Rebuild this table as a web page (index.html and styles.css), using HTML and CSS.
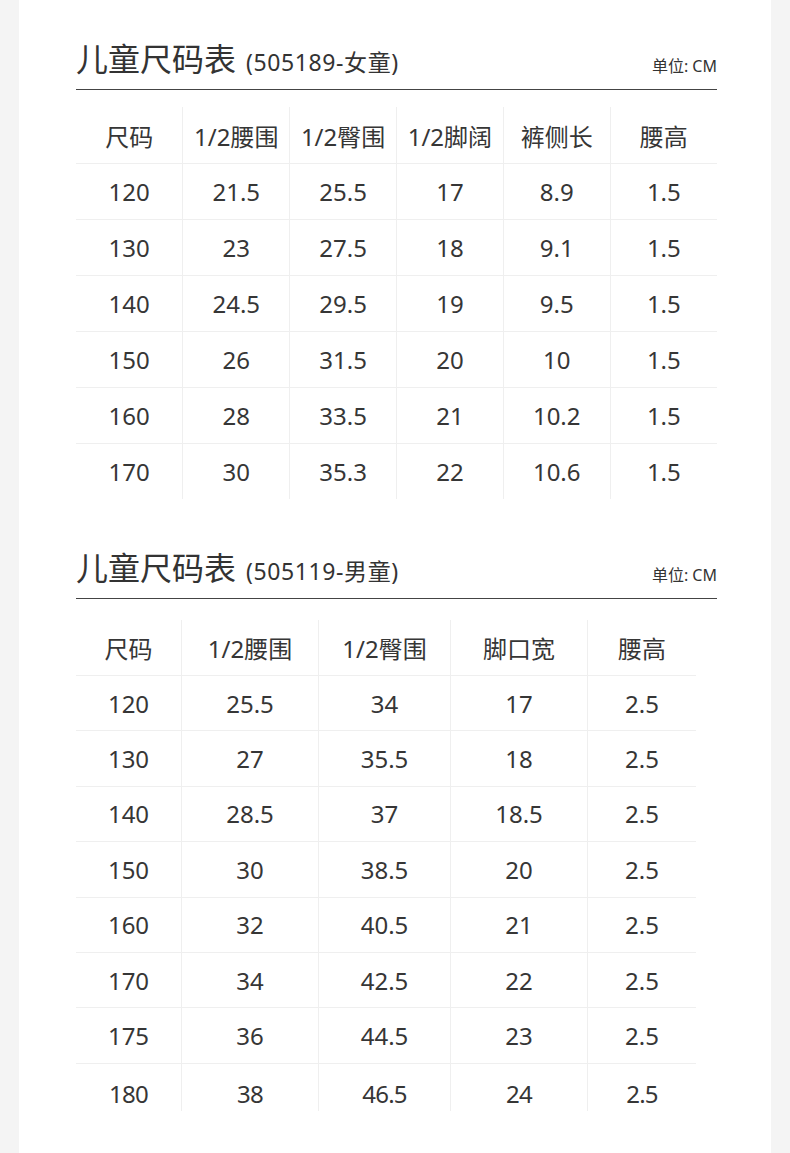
FILE: index.html
```html
<!DOCTYPE html>
<html lang="zh-CN">
<head>
<meta charset="utf-8">
<title>儿童尺码表</title>
<link rel="stylesheet" href="styles.css">
</head>
<body>
<div class="card">
  <section class="chart chart-girl">
    <div class="chart-head">
      <h2 class="chart-title">儿童尺码表<span class="chart-sub">(505189-女童)</span></h2>
      <span class="unit">单位: CM</span>
    </div>
    <table class="size-table t6">
      <thead>
        <tr><th>尺码</th><th>1/2腰围</th><th>1/2臀围</th><th>1/2脚阔</th><th>裤侧长</th><th>腰高</th></tr>
      </thead>
      <tbody>
        <tr><td>120</td><td>21.5</td><td>25.5</td><td>17</td><td>8.9</td><td>1.5</td></tr>
        <tr><td>130</td><td>23</td><td>27.5</td><td>18</td><td>9.1</td><td>1.5</td></tr>
        <tr><td>140</td><td>24.5</td><td>29.5</td><td>19</td><td>9.5</td><td>1.5</td></tr>
        <tr><td>150</td><td>26</td><td>31.5</td><td>20</td><td>10</td><td>1.5</td></tr>
        <tr><td>160</td><td>28</td><td>33.5</td><td>21</td><td>10.2</td><td>1.5</td></tr>
        <tr><td>170</td><td>30</td><td>35.3</td><td>22</td><td>10.6</td><td>1.5</td></tr>
      </tbody>
    </table>
  </section>

  <section class="chart chart-boy">
    <div class="chart-head">
      <h2 class="chart-title">儿童尺码表<span class="chart-sub">(505119-男童)</span></h2>
      <span class="unit">单位: CM</span>
    </div>
    <table class="size-table t5">
      <thead>
        <tr><th>尺码</th><th>1/2腰围</th><th>1/2臀围</th><th>脚口宽</th><th>腰高</th></tr>
      </thead>
      <tbody>
        <tr><td>120</td><td>25.5</td><td>34</td><td>17</td><td>2.5</td></tr>
        <tr><td>130</td><td>27</td><td>35.5</td><td>18</td><td>2.5</td></tr>
        <tr><td>140</td><td>28.5</td><td>37</td><td>18.5</td><td>2.5</td></tr>
        <tr><td>150</td><td>30</td><td>38.5</td><td>20</td><td>2.5</td></tr>
        <tr><td>160</td><td>32</td><td>40.5</td><td>21</td><td>2.5</td></tr>
        <tr><td>170</td><td>34</td><td>42.5</td><td>22</td><td>2.5</td></tr>
        <tr><td>175</td><td>36</td><td>44.5</td><td>23</td><td>2.5</td></tr>
        <tr class="row-last"><td>180</td><td>38</td><td>46.5</td><td>24</td><td>2.5</td></tr>
      </tbody>
    </table>
  </section>
</div>
</body>
</html>
```

FILE: styles.css
```css
html, body {
  margin: 0;
  padding: 0;
}

body {
  background: #f4f4f4;
  font-family: "Noto Sans", "Noto Sans CJK SC", sans-serif;
  color: #333;
}

.card {
  margin: 0 19px;
  min-height: 1153px;
  background: #fff;
  padding: 37px 54px 0 57px;
  box-sizing: border-box;
}

.chart-head {
  display: flex;
  justify-content: space-between;
  align-items: flex-end;
  border-bottom: 1px solid #444;
  padding-bottom: 7px;
}

.chart-title {
  margin: 0;
  font-weight: 400;
  font-size: 32px;
  line-height: 40px;
  color: #333;
  font-family: "Noto Sans CJK SC", sans-serif;
}

.chart-sub {
  font-size: 23px;
  letter-spacing: 0.6px;
  margin-left: 10px;
  font-family: "Noto Sans", "Noto Sans CJK SC", sans-serif;
}

.unit {
  font-size: 16px;
  line-height: 20px;
  color: #333;
  padding-bottom: 6px;
}

.size-table {
  border-collapse: collapse;
  table-layout: fixed;
}

.size-table th,
.size-table td {
  padding: 0;
  text-align: center;
  font-weight: 400;
  font-size: 24px;
  color: #363636;
  border-bottom: 1px solid #efefef;
  border-left: 1px solid #efefef;
}

.size-table th:first-child,
.size-table td:first-child {
  border-left: none;
}

.size-table tbody tr:last-child td {
  border-bottom: none;
}

.t6 {
  width: 641px;
  margin-top: 17px;
}

.t6 th {
  height: 56px;
}

.t6 td {
  height: 55px;
}

.chart-boy {
  margin-top: 47px;
}

.t5 {
  width: 616px;
  margin-top: 21px;
}

.t5 th {
  height: 55px;
}

.t5 td {
  height: 54.4px;
}

.t5 th:nth-child(1) { width: 105px; }
.t5 th:nth-child(2) { width: 136px; }
.t5 th:nth-child(3) { width: 131px; }
.t5 th:nth-child(4) { width: 136px; }
.t5 th:nth-child(5) { width: 108px; }

.t5 .row-last td {
  height: 46px;
  vertical-align: bottom;
  padding-bottom: 1px;
  letter-spacing: -0.8px;
}
```
